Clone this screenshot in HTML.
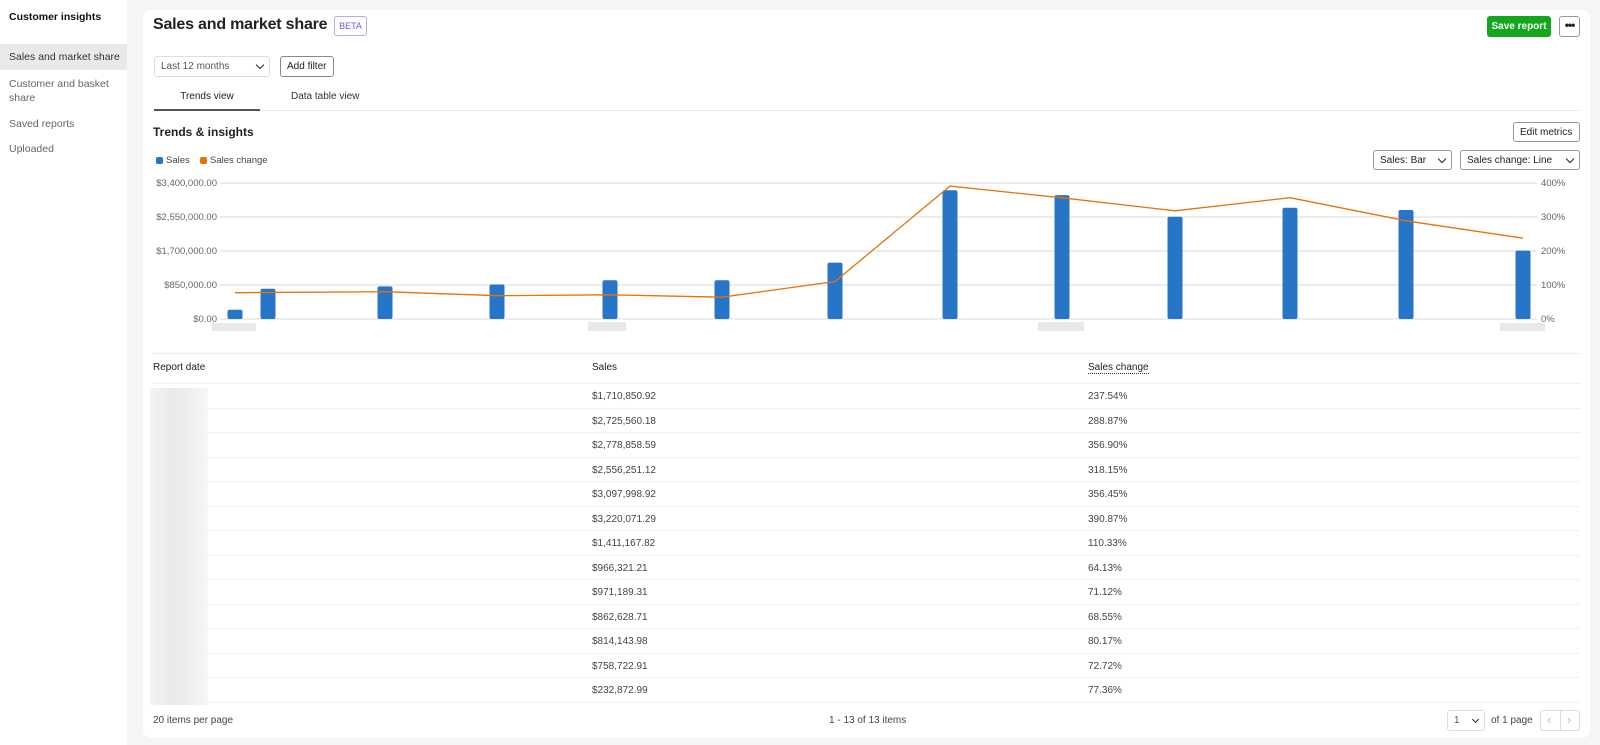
<!DOCTYPE html>
<html><head><meta charset="utf-8"><style>
*{box-sizing:border-box;margin:0;padding:0}
body{width:1600px;height:745px;background:#f4f5f7;font-family:"Liberation Sans",sans-serif;color:#222;position:relative;overflow:hidden;font-size:10px}
.abs{position:absolute}
.side{left:0;top:0;width:127px;height:745px;background:#fff}
.side div{position:absolute;left:9px;font-size:10.5px;color:#666}
.card{left:143px;top:10px;width:1447px;height:728px;background:#fff;border-radius:8px}
.btn{position:absolute;border:1px solid #999;border-radius:3px;background:#fff;font-size:10px;color:#222;display:flex;align-items:center;padding:0 6px}
.row{position:absolute;left:205px;width:1375px;height:1px;background:#f0f0f0}
.cell{position:absolute;font-size:10px;color:#444}
.chev{display:inline-block;width:6px;height:6px;border-right:1.5px solid #222;border-bottom:1.5px solid #222;transform:rotate(45deg);margin-top:-3px}
</style></head><body>
<div class="abs side">
<div style="top:11px;color:#111;font-weight:bold">Customer insights</div>
<div style="left:0;top:44px;width:127px;height:26px;background:#e8e9eb"></div>
<div style="top:51px;color:#333">Sales and market share</div>
<div style="top:77px;line-height:14px">Customer and basket<br>share</div>
<div style="top:118px">Saved reports</div>
<div style="top:143px">Uploaded</div>
</div>
<div class="abs card"></div>
<div class="abs" style="left:153px;top:16px;font-size:16px;font-weight:bold;color:#222;letter-spacing:-0.2px">Sales and market share</div>
<div class="abs" style="left:334px;top:16px;width:33px;height:20px;border:1px solid #b3afef;border-radius:3px;color:#6a5fe0;font-size:9px;text-align:center;line-height:18px">BETA</div>
<div class="abs" style="left:1487px;top:16px;width:64px;height:21px;background:#14a61d;border-radius:3px;color:#fff;font-weight:bold;font-size:10px;text-align:center;line-height:21px">Save report</div>
<div class="abs" style="left:1559px;top:16px;width:21px;height:21px;border:1px solid #999;border-radius:3px;text-align:center;line-height:17px;font-weight:bold;font-size:12px;letter-spacing:-1px">•••</div>
<div class="btn" style="left:154px;top:56px;width:116px;height:21px;border-color:#ddd;color:#555;justify-content:space-between">Last 12 months<span class="chev"></span></div>
<div class="btn" style="left:280px;top:56px;width:54px;height:21px;border-color:#888">Add filter</div>
<div class="abs" style="left:154px;top:91px;width:106px;text-align:center;font-size:10px">Trends view</div>
<div class="abs" style="left:291px;top:91px;font-size:10px;color:#333">Data table view</div>
<div class="abs" style="left:154px;top:110px;width:1426px;height:1px;background:#e8e8e8"></div>
<div class="abs" style="left:154px;top:109px;width:106px;height:2px;background:#555"></div>
<div class="abs" style="left:153px;top:125px;font-size:12px;font-weight:bold">Trends &amp; insights</div>
<div class="btn" style="left:1513px;top:122px;width:67px;height:20px">Edit metrics</div>
<div class="btn" style="left:1373px;top:150px;width:79px;height:20px;justify-content:space-between">Sales: Bar<span class="chev"></span></div>
<div class="btn" style="left:1460px;top:150px;width:120px;height:20px;justify-content:space-between">Sales change: Line<span class="chev"></span></div>
<div class="abs" style="left:156px;top:157px;width:7px;height:7px;border-radius:2px;background:#2775c6"></div>
<div class="abs" style="left:166px;top:155px;font-size:9.5px;color:#444">Sales</div>
<div class="abs" style="left:200px;top:157px;width:7px;height:7px;border-radius:2px;background:#e8710a"></div>
<div class="abs" style="left:210px;top:155px;font-size:9.5px;color:#444">Sales change</div>
<svg class="abs" style="left:0;top:0" width="1600" height="745">
<g stroke="#e6e6e6" stroke-width="1.5"><line x1="220" x2="1537" y1="183" y2="183"/><line x1="220" x2="1537" y1="217" y2="217"/><line x1="220" x2="1537" y1="251" y2="251"/><line x1="220" x2="1537" y1="285" y2="285"/><line x1="220" x2="1537" y1="319" y2="319"/></g>
<g font-family="Liberation Sans" font-size="9.5" fill="#666" text-anchor="end"><text x="217" y="186">$3,400,000.00</text><text x="217" y="220">$2,550,000.00</text><text x="217" y="254">$1,700,000.00</text><text x="217" y="288">$850,000.00</text><text x="217" y="322">$0.00</text></g>
<g font-family="Liberation Sans" font-size="9.5" fill="#666"><text x="1541" y="186">400%</text><text x="1541" y="220">300%</text><text x="1541" y="254">200%</text><text x="1541" y="288">100%</text><text x="1541" y="322">0%</text></g>
<g fill="#2775c6">
<rect x="227.5" y="309.7" width="15" height="9.3" rx="2"/>
<rect x="260.5" y="288.7" width="15" height="30.3" rx="2"/>
<rect x="377.5" y="286.4" width="15" height="32.6" rx="2"/>
<rect x="489.5" y="284.5" width="15" height="34.5" rx="2"/>
<rect x="602.5" y="280.2" width="15" height="38.8" rx="2"/>
<rect x="714.5" y="280.3" width="15" height="38.7" rx="2"/>
<rect x="827.5" y="262.6" width="15" height="56.4" rx="2"/>
<rect x="942.5" y="190.2" width="15" height="128.8" rx="2"/>
<rect x="1054.5" y="195.1" width="15" height="123.9" rx="2"/>
<rect x="1167.5" y="216.7" width="15" height="102.3" rx="2"/>
<rect x="1282.5" y="207.8" width="15" height="111.2" rx="2"/>
<rect x="1398.5" y="210" width="15" height="109" rx="2"/>
<rect x="1515.5" y="250.6" width="15" height="68.4" rx="2"/>
</g>
<polyline fill="none" stroke="#e8710a" stroke-width="1.3" points="235,292.7 385,291.7 497,295.7 610,294.8 722,297.2 835,281.5 950,186.1 1062,197.8 1175,210.8 1290,197.7 1406,220.8 1523,238.2"/>
<g fill="#e4e4e4"><rect x="212" y="323" width="44" height="8" opacity=".8"/><rect x="588" y="322" width="38" height="9" opacity=".8"/><rect x="1038" y="322" width="46" height="9" opacity=".8"/><rect x="1500" y="323" width="45" height="8" opacity=".8"/></g>
</svg>
<div class="abs" style="left:153px;top:353px;width:1427px;height:1px;background:#ececec"></div>
<div class="cell" style="left:153px;top:362px;color:#222">Report date</div>
<div class="cell" style="left:592px;top:362px;color:#222">Sales</div>
<div class="cell" style="left:1088px;top:362px;color:#222;border-bottom:1px dotted #333">Sales change</div>
<div class="abs" style="left:153px;top:383px;width:1427px;height:1px;background:#f0f0f0"></div>
<div class="abs" style="left:150px;top:388px;width:58px;height:317px;background:linear-gradient(90deg,#f3f3f3,#e9eaea 40%,#ececec 60%,#f7f7f7)"></div>
<div id="rows"></div>
<div class="cell" style="left:153px;top:715px">20 items per page</div>
<div class="cell" style="left:829px;top:715px">1 - 13 of 13 items</div>
<div class="btn" style="left:1447px;top:710px;width:38px;height:21px;border-color:#ddd;justify-content:space-between;color:#555">1<span class="chev" style="width:5px;height:5px"></span></div>
<div class="cell" style="left:1491px;top:715px">of 1 page</div>
<div class="abs" style="left:1540px;top:710px;width:40px;height:21px;border:1px solid #ddd;border-radius:3px;color:#bbb;font-size:13px;line-height:18px"><span style="position:absolute;left:6px">‹</span><span style="position:absolute;left:19px;top:0;width:1px;height:19px;background:#ddd"></span><span style="position:absolute;left:26px">›</span></div>
<script>
var s=["$1,710,850.92","$2,725,560.18","$2,778,858.59","$2,556,251.12","$3,097,998.92","$3,220,071.29","$1,411,167.82","$966,321.21","$971,189.31","$862,628.71","$814,143.98","$758,722.91","$232,872.99"];
var c=["237.54%","288.87%","356.90%","318.15%","356.45%","390.87%","110.33%","64.13%","71.12%","68.55%","80.17%","72.72%","77.36%"];
var h="";for(var i=0;i<13;i++){var y=383+i*24.5;h+='<div class="cell" style="left:592px;top:'+(y+8)+'px">'+s[i]+'</div><div class="cell" style="left:1088px;top:'+(y+8)+'px">'+c[i]+'</div><div class="row" style="top:'+(y+24.5)+'px"></div>';}
document.getElementById("rows").innerHTML=h;
</script>
</body></html>
